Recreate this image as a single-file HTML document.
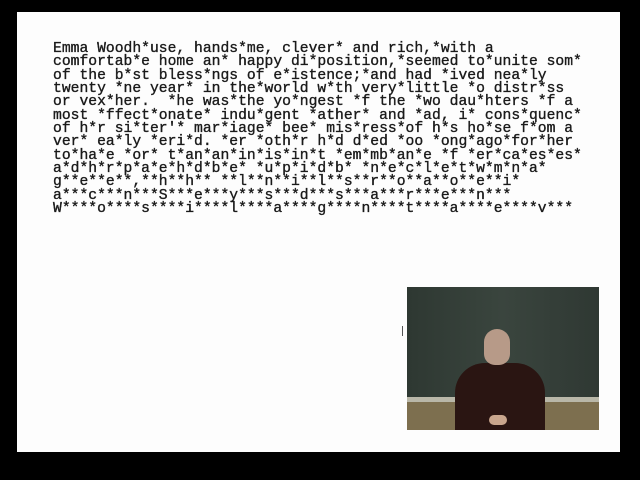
<!DOCTYPE html>
<html><head><style>
html,body{margin:0;padding:0;background:#000;width:640px;height:480px;overflow:hidden}
.slide{position:absolute;left:17px;top:12px;width:603px;height:440px;background:#fdfdfd}
pre{position:absolute;left:53px;top:43px;margin:0;font-family:"Liberation Mono",monospace;font-size:14.7px;line-height:13.33px;color:#1a1a1a;-webkit-text-stroke:0.35px #1a1a1a}
.vid{position:absolute;left:407px;top:287px;width:192px;height:143px;background:#333d37;overflow:hidden}
</style></head><body>
<div class="slide"></div>
<pre>Emma Woodh*use, hands*me, clever* and rich,*with a
comfortab*e home an* happy di*position,*seemed to*unite som*
of the b*st bless*ngs of e*istence;*and had *ived nea*ly
twenty *ne year* in the*world w*th very*little *o distr*ss
or vex*her.  *he was*the yo*ngest *f the *wo dau*hters *f a
most *ffect*onate* indu*gent *ather* and *ad, i* cons*quenc*
of h*r si*ter'* mar*iage* bee* mis*ress*of h*s ho*se f*om a
ver* ea*ly *eri*d. *er *oth*r h*d d*ed *oo *ong*ago*for*her
to*ha*e *or* t*an*an*in*is*in*t *em*mb*an*e *f *er*ca*es*es*
a*d*h*r*p*a*e*h*d*b*e* *u*p*i*d*b* *n*e*c*l*e*t*w*m*n*a*
g**e**e**,**h**h** **l**n**i**l**s**r**o**a**o**e**i*
a***c***n***S***e***y***s***d***s***a***r***e***n***
W****o****s****i****l****a****g****n****t****a****e****v***</pre>
<div style="position:absolute;left:402px;top:326px;width:1px;height:10px;background:#555"></div>
<div class="vid">
 <div style="position:absolute;left:0;top:0;width:192px;height:110px;background:linear-gradient(90deg,#2e3832,#3a453e 50%,#2f3833)"></div>
 <div style="position:absolute;left:0;top:110px;width:192px;height:5px;background:#b9b7a8"></div>
 <div style="position:absolute;left:0;top:115px;width:192px;height:28px;background:#7d6f4f"></div>
 <div style="position:absolute;left:48px;top:76px;width:90px;height:70px;background:#2a1512;border-radius:30px 30px 0 0"></div>
 <div style="position:absolute;left:77px;top:42px;width:26px;height:36px;background:#b79a88;border-radius:13px 13px 11px 11px"></div>
 <div style="position:absolute;left:82px;top:128px;width:18px;height:10px;background:#c9a68d;border-radius:5px"></div>
</div>
</body></html>
